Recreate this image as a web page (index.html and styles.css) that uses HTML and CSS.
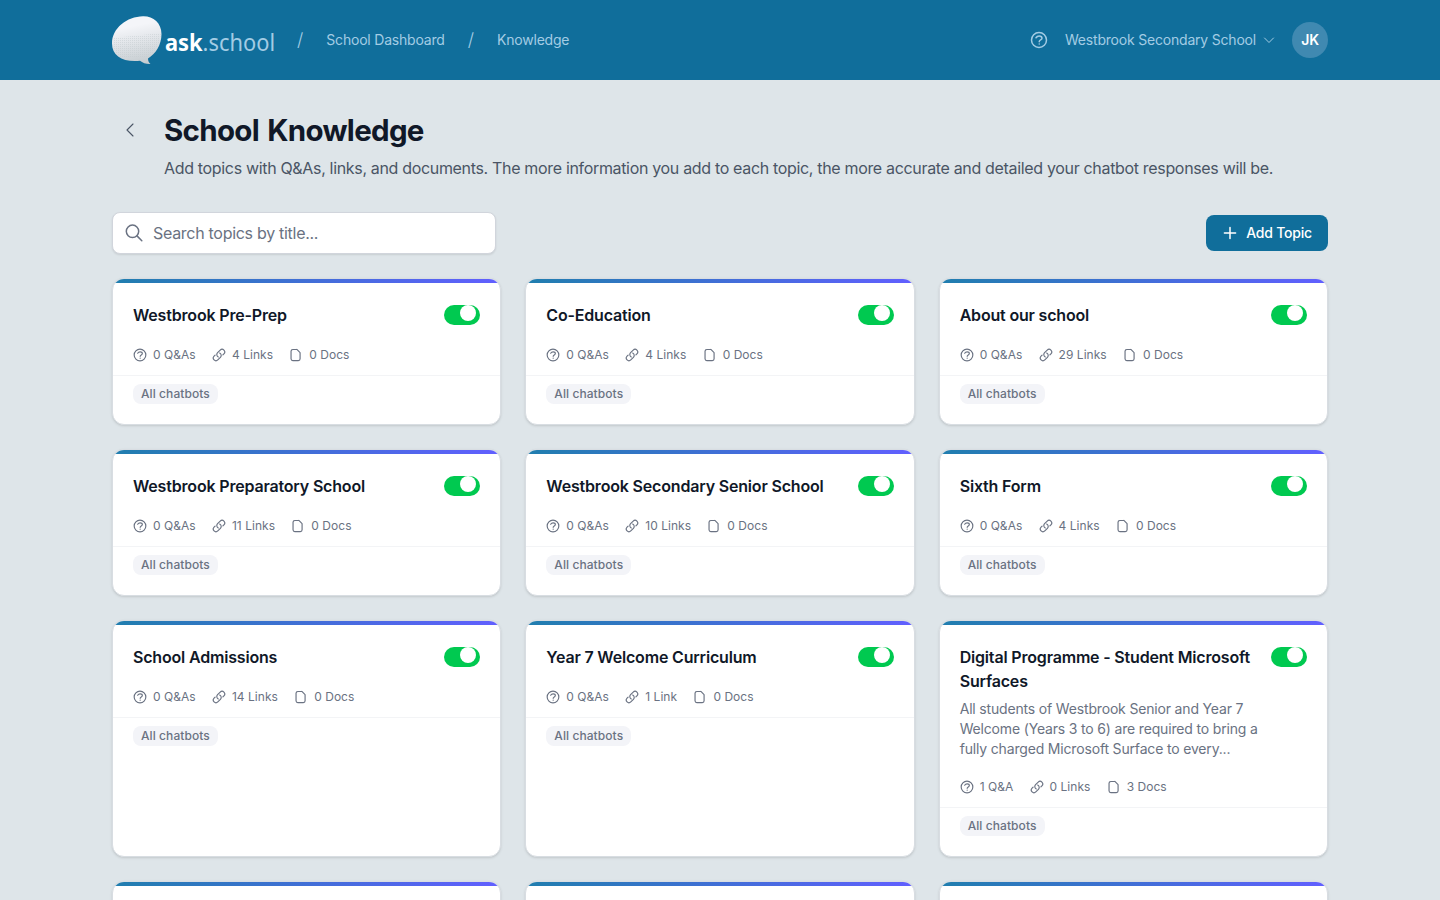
FILE: index.html
```html
<!DOCTYPE html>
<html lang="en">
<head>
<meta charset="utf-8">
<title>School Knowledge</title>
<link rel="stylesheet" href="styles.css">
</head>
<body>
<svg class="sprite" aria-hidden="true">
  <symbol id="help" viewBox="0 0 24 24"><circle cx="12" cy="12" r="10"/><path d="M8 9C9 7.300 10.400 6.500 12.200 6.500c2.200 0 3.800 1.200 3.800 3 0 2.500-3.700 2.300-3.700 4.800M12.300 17.200v.2"/></symbol>
  <symbol id="link" viewBox="0 0 24 24"><path d="M13.190 8.688a4.500 4.500 0 0 1 1.242 7.244l-4.500 4.500a4.500 4.500 0 0 1-6.364-6.364l1.757-1.757m13.350-.622 1.757-1.757a4.500 4.500 0 0 0-6.364-6.364l-4.500 4.500a4.500 4.500 0 0 0 1.242 7.244"/></symbol>
  <symbol id="doc" viewBox="0 0 24 24"><path d="M13.500 2.500H6.500a3 3 0 0 0-3 3v13a3 3 0 0 0 3 3h9.500a3 3 0 0 0 3-3V8zM13.500 2.500L19 8"/></symbol>
</svg>
<header class="topbar">
  <div class="container topbar-row">
    <div class="brand">
      <svg class="bubble" viewBox="0 0 50 50">
        <defs>
          <linearGradient id="shade" x1="0.4" y1="0" x2="0.6" y2="1"><stop offset=".2" stop-color="#f4f5f9"/><stop offset="1" stop-color="#c5ccd0"/></linearGradient>
          <pattern id="dots" width="2" height="2" patternUnits="userSpaceOnUse"><path fill="#c2cace" d="M0 0h1v1H0z"/></pattern>
        </defs>
        <path fill="url(#shade)" d="M31 .3C41 0 49.500 7 49.500 18c0 11-6 20-13.500 24.500 0 2.500 1 4.500 2.500 5.500-4 .2-8-1-10.500-3.200C11 46.500 0 40 0 27.500 0 12 15 .7 31 .3z"/>
        <path fill="url(#dots)" d="M1 22L49 17C48 27 44 35 36 41H8C2 36 0 29 1 22z" opacity=".5"/>
      </svg>
      <span class="wordmark"><b>ask</b>.school</span>
    </div>
    <span class="slash">/</span>
    <span class="crumb">School Dashboard</span>
    <span class="slash">/</span>
    <span class="crumb">Knowledge</span>
    <div class="account">
      <svg class="icon help-icon"><use href="#help"/></svg>
      <span class="school">Westbrook Secondary School</span>
      <svg class="icon chevron" viewBox="0 0 12 12"><path d="M1.500 4l4.500 4.500L10.500 4"/></svg>
      <span class="avatar">JK</span>
    </div>
  </div>
</header>
<main class="container">
  <div class="heading">
    <span class="back"><svg class="icon" viewBox="0 0 8 14"><path d="M7 1L1 7l6 6"/></svg></span>
    <div>
      <h1>School Knowledge</h1>
      <p class="subtitle">Add topics with Q&amp;As, links, and documents. The more information you add to each topic, the more accurate and detailed your chatbot responses will be.</p>
    </div>
  </div>
  <div class="toolbar">
    <div class="search">
      <svg class="icon" viewBox="0 0 18 18"><circle cx="7.500" cy="7.300" r="6.200"/><path d="M12 11.900l4.800 4.800"/></svg>
      <span>Search topics by title...</span>
    </div>
    <button class="add"><svg class="icon" viewBox="0 0 12 12"><path d="M6 .4v11.200M.4 6h11.200"/></svg>Add Topic</button>
  </div>
  <div class="grid" id="topics"></div>
</main>
<script src="topics.js"></script>
</body>
</html>
```
FILE: styles.css
```css
* { box-sizing: border-box; }
html { overflow: hidden; }
body { margin: 0; height: 900px; overflow: hidden; background: #dee5e9; color: #101828; font-family: Inter, "Liberation Sans", sans-serif; font-size: 16px; line-height: 24px; }
.sprite { position: absolute; width: 0; height: 0; }
.container { width: 1216px; margin: 0 auto; }
.icon { fill: none; stroke: currentColor; stroke-width: 1.500; stroke-linecap: round; stroke-linejoin: round; flex: none; overflow: visible; }
.topbar { height: 80px; background: #106e9b; color: #a3cce4; }
.topbar-row { height: 80px; display: flex; align-items: center; font-size: 14px; letter-spacing: -.2px; }
.brand { display: flex; width: 162px; height: 48px; }
.bubble { width: 50px; height: 50px; flex: none; }
.wordmark { font-family: "Noto Sans", sans-serif; font-size: 23.500px; line-height: 32px; padding-top: 10px; margin-left: 3px; white-space: nowrap; letter-spacing: 0; transform: scaleX(.93); transform-origin: left; }
.wordmark b { color: #fff; }
.slash { width: 52.300px; text-align: center; font-size: 18px; font-weight: 300; }
.account { margin-left: auto; display: flex; align-items: center; }
.help-icon { width: 18px; height: 18px; stroke-width: 2; margin-right: 17px; }
.chevron { width: 12px; height: 12px; stroke-width: 1; margin: 0 17px 0 7px; }
.avatar { width: 36px; height: 36px; border-radius: 50%; background: #4089b1; color: #fff; font-weight: 600; line-height: 36px; text-align: center; }
.heading { display: flex; padding-top: 32px; }
.back { width: 36px; height: 36px; margin-right: 16px; display: flex; align-items: center; justify-content: center; color: #4a5565; }
.back svg { width: 8px; height: 14px; stroke-width: 1.100; }
h1 { margin: 0; font-size: 29.500px; line-height: 36px; font-weight: 700; letter-spacing: -.7px; word-spacing: 2px; }
.subtitle { margin: 8px 0 0; color: #4a5565; white-space: nowrap; letter-spacing: -.33px; }
.toolbar { margin: 32px 0 24px; display: flex; align-items: center; justify-content: space-between; }
.search { width: 384px; height: 42px; background: #fff; border: 1px solid #d1d5dc; border-radius: 8px; padding-left: 12px; display: flex; align-items: center; gap: 10px; color: #6a7282; letter-spacing: -.29px; box-shadow: 0 1px 2px #0000001a; }
.search svg { width: 18px; height: 18px; }
.add { width: 122px; height: 36px; border: 0; border-radius: 8px; background: #106e9b; color: #fff; font: 500 14px/20px Inter, sans-serif; letter-spacing: -.2px; display: flex; align-items: center; justify-content: flex-end; gap: 10px; padding: 0 16px 0 0; }
.add svg { width: 12px; height: 12px; }
.grid { display: grid; grid-template-columns: repeat(3, minmax(0, 1fr)); gap: 24px; }
.card { position: relative; overflow: hidden; background: #fff; border: 1px solid #d8dde2; border-radius: 12px; box-shadow: 0 1px 3px #0000001a, 0 1px 2px -1px #0000001a; }
.card::before { content: ""; position: absolute; top: 0; left: 0; right: 0; height: 4px; background: linear-gradient(90deg, #207eae, #615fff); }
.card-top { padding: 24px 20px 12px; border-bottom: 1px solid #f3f4f6; }
.card-head { display: flex; gap: 12px; justify-content: space-between; }
h2 { margin: 0; font-size: 16px; line-height: 24px; font-weight: 600; letter-spacing: -.18px; }
.desc { margin: 6px 0 0; font-size: 14px; line-height: 20px; color: #6a7282; letter-spacing: -.17px; }
.toggle { width: 36px; height: 20px; margin-top: 2px; border-radius: 10px; background: #00c950; flex: none; display: flex; justify-content: flex-end; padding-right: 4px; }
.toggle i { width: 16px; height: 16px; border-radius: 50%; background: #fff; }
.stats { margin-top: 20px; display: flex; gap: 16.300px; font-size: 12px; line-height: 16px; letter-spacing: .03px; color: #6a7282; }
.stats span { display: flex; align-items: center; gap: 6px; }
.stats svg { width: 14px; height: 14px; stroke-width: 2; }
.card-foot { padding: 8px 20px 20px; }
.chip { display: block; width: max-content; height: 20px; padding: 0 8px; border-radius: 8px; background: #f3f4f8; color: #6a7282; font-size: 12px; line-height: 20px; font-weight: 500; letter-spacing: .08px; }
```
FILE: topics.js
```js
const topics = [
  ["Westbrook Pre-Prep", "0 Q&As", "4 Links", "0 Docs"],
  ["Co-Education", "0 Q&As", "4 Links", "0 Docs"],
  ["About our school", "0 Q&As", "29 Links", "0 Docs"],
  ["Westbrook Preparatory School", "0 Q&As", "11 Links", "0 Docs"],
  ["Westbrook Secondary Senior School", "0 Q&As", "10 Links", "0 Docs"],
  ["Sixth Form", "0 Q&As", "4 Links", "0 Docs"],
  ["School Admissions", "0 Q&As", "14 Links", "0 Docs"],
  ["Year 7 Welcome Curriculum", "0 Q&As", "1 Link", "0 Docs"],
  ["Digital Programme - Student Microsoft Surfaces", "1 Q&A", "0 Links", "3 Docs", "All students of Westbrook Senior and Year 7 Welcome (Years 3 to 6) are required to bring a fully charged Microsoft Surface to every..."],
  [], [], []
];
const stat = (icon, text) => `<span><svg class="icon"><use href="#${icon}"/></svg>${text.replace("&", "&amp;")}</span>`;
document.getElementById("topics").innerHTML = topics.map(([title, qa, links, docs, desc]) => title ? `
<article class="card">
  <div class="card-top">
    <div class="card-head"><div><h2>${title}</h2>${desc ? `<p class="desc">${desc}</p>` : ""}</div><span class="toggle"><i></i></span></div>
    <div class="stats">${stat("help", qa)}${stat("link", links)}${stat("doc", docs)}</div>
  </div>
  <div class="card-foot"><span class="chip">All chatbots</span></div>
</article>` : `<article class="card"><div class="card-top"></div></article>`).join("");
```
